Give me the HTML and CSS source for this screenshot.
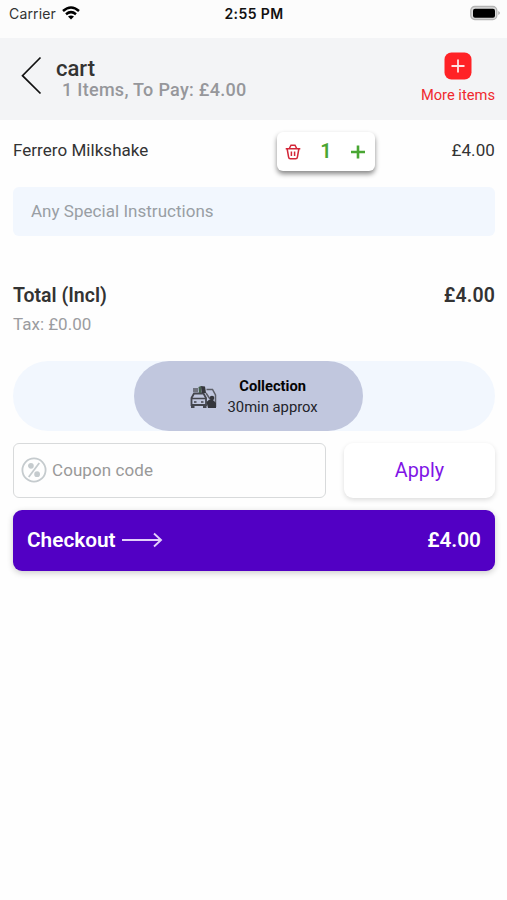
FILE: index.html
```html
<!DOCTYPE html>
<html lang="en">
<head>
<meta charset="utf-8">
<title>Cart</title>
<link rel="stylesheet" href="styles.css">
</head>
<body>
<div class="status">
  <div class="carrier"><span>Carrier</span>
    <svg width="18" height="14" viewBox="0 0 18 14" fill="none" stroke="#000" stroke-width="2.5"><path d="M1 5Q9-2 17 5M4 8.200Q9 4 14 8.200"/><path d="M9 13.500L6 10.600Q9 8.200 12 10.600Z" fill="#000" stroke="none"/></svg>
  </div>
  <div class="clock">2:55 PM</div>
  <svg class="battery" width="31" height="16" viewBox="0 0 31 16"><rect x=".8" y="1.500" width="26" height="13" rx="4" fill="#ddd" stroke="#b4b4b4" stroke-width="1.300"/><rect x="3" y="3.700" width="22" height="9" rx="2" fill="#000"/><path d="M28.300 6Q31.500 8 28.300 10Z" fill="#aaa"/></svg>
</div>
<header class="header">
  <svg class="back" width="22" height="40" viewBox="0 0 22 40" fill="none" stroke="#111" stroke-width="1.700"><path d="M20.500 1.500L2.500 19.700L20.500 37.500"/></svg>
  <div class="heading"><h1>cart</h1><p>1 Items, To Pay: £4.00</p></div>
  <div class="more">
    <svg width="28" height="28" viewBox="0 0 28 28"><rect x=".5" y=".5" width="27" height="27" rx="7" fill="#ff2226"/><path d="M14 7.500V20.500M7.500 14H20.500" stroke="#ffe4e4" stroke-width="1.800"/></svg>
    <span>More items</span>
  </div>
</header>
<main>
  <div class="item">
    <span class="name">Ferrero Milkshake</span>
    <div class="stepper">
      <svg width="16" height="16" viewBox="0 0 16 16" fill="none" stroke="#d32638" stroke-width="1.500"><path d="M.7 4.700H15.300M2.200 5L3.600 13.200Q3.800 14.800 5.300 14.800H10.700Q12.200 14.800 12.400 13.200L13.800 5M4.300 4.500L6 1.200H10L11.700 4.500M6.400 7.500V12M9.600 7.500V12"/></svg>
      <span class="qty">1</span>
      <svg width="14" height="14" viewBox="0 0 14 14" stroke="#49a633" stroke-width="2.600"><path d="M7 .5V13.500M0 7H14"/></svg>
    </div>
    <span class="price">£4.00</span>
  </div>
  <div class="note">Any Special Instructions</div>
  <div class="total"><span>Total (Incl)</span><span class="amount">£4.00</span></div>
  <div class="tax">Tax: £0.00</div>
  <div class="modes">
    <div class="mode">
      <svg width="27" height="24" viewBox="0 0 27 24"><path d="M1.500 13L4 8.500H13.500L16 13V20H1.500Z" fill="none" stroke="#44464e" stroke-width="1.800"/><path d="M1 13.500H16.500M4 17H6.500M11 17H13.500" stroke="#44464e" stroke-width="1.500"/><path d="M1 19H4.500V23H1ZM13 19H16.500V23H13Z" fill="#44464e"/><path d="M3 3H8V7H3Z" fill="#70737f"/><path d="M8.500 2L11 1V8H9Z" fill="#46604e"/><path d="M11 1L15 1.500L16 8H11.500Z" fill="#34353b"/><path d="M16.500 4.500H22.500L25.500 10V22M16 8L20 14" fill="none" stroke="#5c5e67" stroke-width="1.500"/><circle cx="22" cy="13" r="2.300" fill="#34353b"/><path d="M16.500 17Q20 13 23 15L26 18V23H18Z" fill="#34353b"/></svg>
      <div class="mode-text"><b>Collection</b><span>30min approx</span></div>
    </div>
  </div>
  <div class="coupon">
    <div class="code">
      <svg width="26" height="26" viewBox="0 0 26 26" fill="none" stroke="#c5cbce" stroke-width="1.800"><circle cx="13" cy="13" r="11.600"/><path d="M18.300 6L7.700 20"/><circle cx="9.900" cy="8.800" r="2" fill="#c5cbce"/><circle cx="16.100" cy="17.200" r="2" fill="#c5cbce"/></svg>
      <span>Coupon code</span>
    </div>
    <div class="apply"><span>Apply</span></div>
  </div>
  <div class="checkout">
    <span class="go">Checkout</span>
    <svg width="41" height="16" viewBox="0 0 41 16" fill="none" stroke="#e2d0fa" stroke-width="1.900"><path d="M0 8H39M32 1.500L39 8L32 14.500"/></svg>
    <span class="sum">£4.00</span>
  </div>
</main>
</body>
</html>
```
FILE: styles.css
```css
* { box-sizing: border-box; }
body { margin: 0; width: 507px; height: 900px; background: #fefefe; font-family: Roboto, sans-serif; color: #333; overflow: hidden; }
svg { display: block; flex: none; }
span, b, p { white-space: nowrap; }
.status { height: 38px; padding: 5px 6px 0 9px; display: grid; grid-template-columns: 1fr auto 1fr; align-items: start; background: #fcfcfc; font-family: Inter, sans-serif; }
.carrier { display: flex; gap: 6px; font-size: 14px; line-height: 18px; letter-spacing: .15px; }
.carrier svg { margin-top: 1px; }
.clock { font-size: 14px; font-weight: 600; line-height: 18px; letter-spacing: .4px; margin-left: -2px; color: #111; }
.battery { justify-self: end; }
.header { height: 82px; background: #f3f4f6; display: flex; padding: 0 12px 0 20px; }
.back { margin-top: 18px; }
.heading { margin-left: 14px; padding-top: 18px; }
h1 { margin: 0; font-size: 22px; line-height: 25px; font-weight: 500; }
.heading p { margin: -2px 0 0 6px; font-size: 18px; line-height: 22px; font-weight: 500; letter-spacing: .29px; color: #96979b; }
.more { margin-left: auto; padding-top: 14px; display: flex; flex-direction: column; align-items: center; color: #f0282e; font-size: 14.700px; line-height: 18px; gap: 6px; }
.more svg { margin-left: 1px; }
main { padding: 0 12px 0 13px; }
.item { height: 67px; padding-top: 12px; display: grid; grid-template-columns: 264px 98px 1fr; align-items: start; font-size: 17px; line-height: 37px; }
.name { letter-spacing: .04px; }
.stepper { height: 39px; border-radius: 6px; background: #fff; box-shadow: 0 3px 5px #0007; display: flex; align-items: center; justify-content: space-between; padding: 1px 10px 0 8px; }
.qty { color: #49a633; font-size: 20px; font-weight: 600; margin-top: -2px; }
.price { text-align: right; letter-spacing: .1px; }
.note { height: 49px; border-radius: 6px; background: #f2f7fe; padding-left: 18px; color: #999ea4; font-size: 17px; line-height: 49px; letter-spacing: .03px; }
.total { margin-top: 47px; height: 26px; display: flex; justify-content: space-between; font-size: 19.500px; font-weight: 600; line-height: 26px; }
.amount { letter-spacing: .15px; }
.tax { margin-top: 4px; height: 22px; color: #9b9ca0; font-size: 17px; line-height: 22px; }
.modes { margin-top: 26px; height: 70px; border-radius: 35px; background: #f2f7fe; display: flex; justify-content: center; padding-right: 12px; }
.mode { width: 229px; border-radius: 35px; background: #c1c7de; display: flex; align-items: center; padding: 1px 0 0 56px; gap: 11px; }
.mode-text { display: flex; flex-direction: column; align-items: center; font-size: 14.800px; line-height: 21px; color: #22232a; }
.mode-text b { color: #050505; font-weight: 700; font-size: 14.700px; }
.coupon { margin-top: 12px; display: flex; gap: 18px; height: 55px; }
.code { width: 313px; border: 1.500px solid #d8dadb; border-radius: 6px; display: flex; align-items: center; gap: 5px; padding: 0 0 2px 7px; color: #999; font-size: 17px; letter-spacing: .08px; }
.apply { flex: 1; border-radius: 9px; background: #fff; box-shadow: 0 2px 5px #0002; display: flex; align-items: center; justify-content: center; color: #8014e6; font-size: 19.800px; }
.checkout { margin-top: 12px; height: 61px; border-radius: 9px; background: #5200c4; box-shadow: 0 2px 6px #0003; display: flex; align-items: center; padding: 0 14px 1px; color: #fff; font-size: 20.800px; font-weight: 600; }
.checkout svg { margin-left: 6px; }
.sum { margin-left: auto; }
```
